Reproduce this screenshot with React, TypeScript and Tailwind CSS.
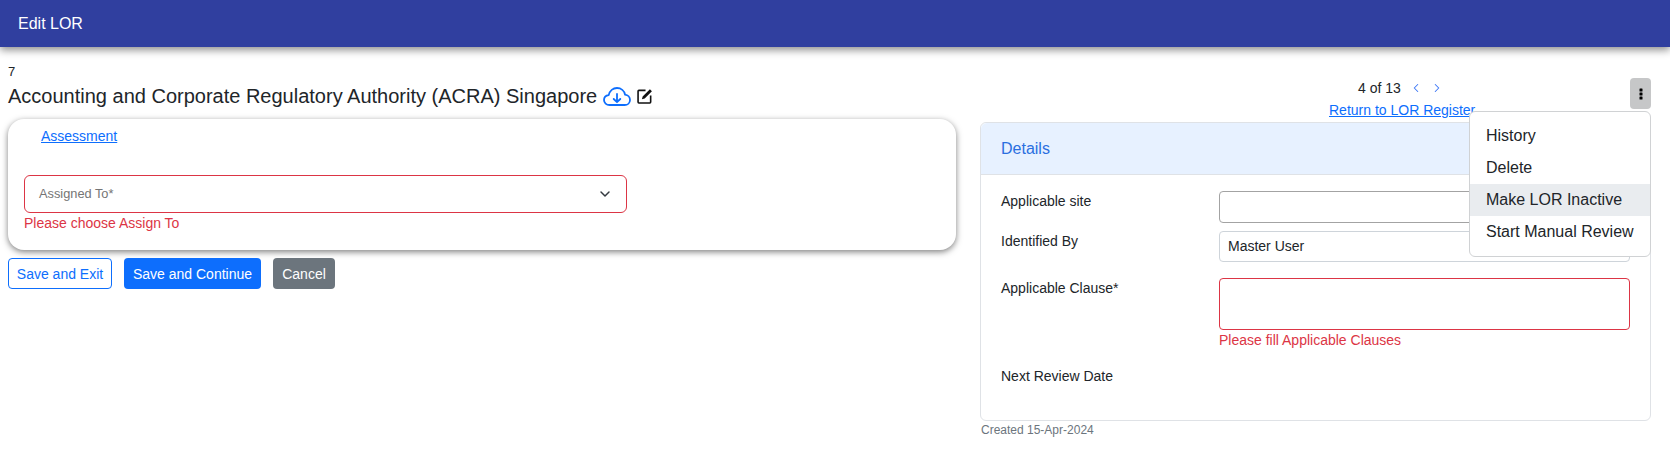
import { ChevronDown, ChevronLeft, ChevronRight } from "lucide-react";

const labelClass = "w-[218px] shrink-0 text-sm leading-[21px] text-[#212529]";
const menuItems = ["History", "Delete", "Make LOR Inactive", "Start Manual Review"];

const Kebab = () => (
  <svg width="4" height="12" viewBox="0 0 4 12" className="fill-black">
    <rect x="0.5" y="0.5" width="3" height="3" rx="0.5" />
    <rect x="0.5" y="4.5" width="3" height="3" rx="0.5" />
    <rect x="0.5" y="8.5" width="3" height="3" rx="0.5" />
  </svg>
);

const CloudIcon = () => (
  <svg width="28" height="19" viewBox="0 0 28 19" fill="none" className="ml-[6px] stroke-[#0d6efd]" strokeWidth="1.8" strokeLinecap="round" strokeLinejoin="round">
    <path d="M6.5 18C3.4 18 1 15.8 1 13c0-2.6 2-4.6 4.7-4.9C6.7 3.8 10.1 1 14 1c4 0 7.3 2.8 8.1 6.7 2.8.4 4.9 2.6 4.9 5.2 0 2.9-2.4 5.1-5.4 5.1H6.5Z" />
    <path d="M14 7v8M10.7 12l3.3 3.2 3.3-3.2" />
  </svg>
);

const EditIcon = () => (
  <svg width="16" height="16" viewBox="0 0 15 15" className="ml-[6px]">
    <path d="M8 2.2H1.8a.8.8 0 0 0-.8.8v10.2c0 .4.4.8.8.8H12c.4 0 .8-.4.8-.8V7" fill="none" stroke="#111" strokeWidth="1.5" />
    <path d="M4.6 10.6 5.3 8l6.8-6.8 1.9 1.9-6.8 6.8-2.6.7Z" fill="#111" />
  </svg>
);

const DetailsCard = () => (
  <div className="mt-[2px] rounded-[6px] border border-[#dfe2e6] bg-white">
    <div className="flex h-[52px] items-center rounded-t-[6px] border-b border-[#dfe2e6] bg-[#e7f1ff] pl-[20px] text-base text-[#2a6fe0]">
      Details
    </div>
    <div className="h-[245px] pr-[20px] pl-[20px] pt-[16px]">
      <div className="flex h-[40px]">
        <p className={labelClass}>Applicable site</p>
        <div className="h-[32px] w-full rounded-[4px] border border-[#a3a3a3]" />
      </div>
      <div className="flex h-[47px]">
        <p className={labelClass}>Identified By</p>
        <div className="flex h-[31px] w-full items-center rounded-[4px] border border-[#ced4da] pb-[1px] pl-2 text-sm text-[#212529]">
          Master User
        </div>
      </div>
      <div className="flex">
        <p className={labelClass}>Applicable Clause*</p>
        <div className="w-full">
          <div className="h-[52px] rounded-[4px] border border-[#dc3545]" />
          <p className="mt-[1px] text-sm leading-[19px] text-[#dc3545]">Please fill Applicable Clauses</p>
        </div>
      </div>
      <p className={`mt-[16px] ${labelClass}`}>Next Review Date</p>
    </div>
  </div>
);

export default function App() {
  return (
    <div className="min-h-[474px] bg-white font-['Liberation_Sans',Arial,sans-serif]">
      <header className="flex h-[47px] items-center bg-[#303f9f] pl-[18px] text-base text-white shadow-[0_3px_8px_rgba(0,0,0,0.45)]">
        Edit LOR
      </header>

      <main className="pr-[19px] pl-2">
        <div className="flex h-[73px] items-start pt-4">
          <div className="flex-1">
            <p className="text-[13px] leading-[18px] text-[#212529]">7</p>
            <div className="flex items-center text-[20px] leading-[30px] text-[#212529]">
              <span>Accounting and Corporate Regulatory Authority (ACRA) Singapore</span>
              <CloudIcon />
              <EditIcon />
            </div>
          </div>

          <div className="mt-4 mr-[154px] w-[147px] text-sm text-[#212529]">
            <div className="flex h-[18px] items-center pl-[29px]">
              <span>4 of 13</span>
              <ChevronLeft className="ml-[8px] text-[#3b76f6]" size={14} strokeWidth={1.8} />
              <ChevronRight className="ml-[7px] text-[#3b76f6]" size={14} strokeWidth={1.8} />
            </div>
            <a className="mt-[4px] block leading-[18px] whitespace-nowrap text-[#0d6efd] underline">
              Return to LOR Register
            </a>
          </div>

          <div className="relative mt-[15px]">
            <button className="flex h-[31px] w-[21px] items-center justify-center rounded-[4px] bg-[#c6c7c8]">
              <Kebab />
            </button>
            <div className="absolute top-[33px] right-0 z-10 h-[146px] w-[182px] rounded-[6px] border border-[#d0d2d4] bg-white py-[8px] text-base text-[#212529]">
              {menuItems.map((item) => (
                <div
                  key={item}
                  className={`flex h-[32px] items-center pl-[16px] whitespace-nowrap ${item === "Make LOR Inactive" ? "bg-[#e9ecef]" : ""}`}
                >
                  {item}
                </div>
              ))}
            </div>
          </div>
        </div>

        <div className="grid grid-cols-[948px_671px] gap-x-[24px]">
          <div>
            <div className="-mt-[1px] h-[131px] rounded-[16px] bg-white pt-[8px] pl-[16px] shadow-[0_2px_6px_rgba(0,0,0,0.5)]">
              <a className="ml-[17px] block text-sm leading-[19px] text-[#0d6efd] underline">Assessment</a>
              <div className="mt-[29px] flex h-[38px] w-[603px] items-center justify-between rounded-[6px] border border-[#dc3545] pr-[13px] pl-[14px] text-[12.8px] text-[#757575]">
                <span>Assigned To*</span>
                <ChevronDown className="text-[#343a40]" size={16} strokeWidth={2.2} />
              </div>
              <p className="mt-[1px] text-sm leading-[19px] text-[#dc3545]">Please choose Assign To</p>
            </div>

            <div className="mt-[8px] flex gap-3 text-sm">
              <button className="h-[31px] w-[104px] rounded-[4px] border border-[#0d6efd] bg-white text-[#0d6efd]">Save and Exit</button>
              <button className="h-[31px] w-[137px] rounded-[4px] bg-[#0d6efd] text-white">Save and Continue</button>
              <button className="h-[31px] w-[62px] rounded-[4px] bg-[#6c757d] text-white">Cancel</button>
            </div>
          </div>

          <div>
            <DetailsCard />
            <p className="mt-[1px] pl-[1px] text-xs text-[#6c757d]">Created 15-Apr-2024</p>
          </div>
        </div>
      </main>
    </div>
  );
}
